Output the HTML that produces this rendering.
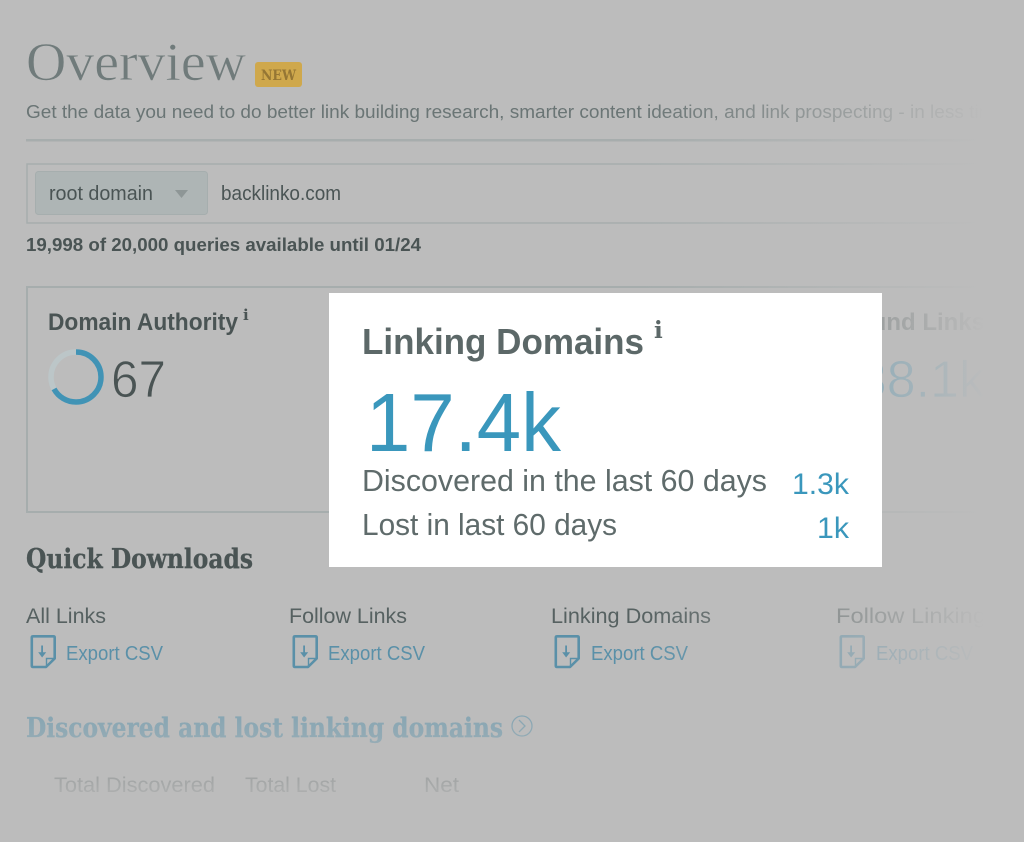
<!DOCTYPE html>
<html lang="en">
<head>
<meta charset="utf-8">
<title>Overview</title>
<style>
html,body{margin:0;padding:0;background:#bcbcbc;width:1024px;height:842px;overflow:hidden}
svg{display:block}
text{font-family:"Liberation Sans",sans-serif;white-space:pre}
.slab{font-family:"DejaVu Serif","Liberation Serif",serif;font-weight:700}
.ser{font-family:"Liberation Serif",serif}
.b{font-weight:700}
.dk{fill:#4a5454}
.md{fill:#566161}
.lnk{fill:#5a90a8;font-size:20px}
.ic{fill:none;stroke:#5a90a8;stroke-width:2.6;stroke-linejoin:round}
</style>
</head>
<body>
<svg width="1024" height="842" viewBox="0 0 1024 842" xmlns="http://www.w3.org/2000/svg">
<defs>
<linearGradient id="fr" gradientUnits="userSpaceOnUse" x1="640" y1="0" x2="985" y2="0">
<stop offset="0" stop-color="#bcbcbc" stop-opacity="0"/>
<stop offset="1" stop-color="#bcbcbc" stop-opacity="1"/>
</linearGradient>
<linearGradient id="fb" gradientUnits="userSpaceOnUse" x1="0" y1="670" x2="0" y2="815">
<stop offset="0" stop-color="#bcbcbc" stop-opacity="0"/>
<stop offset="1" stop-color="#bcbcbc" stop-opacity="1"/>
</linearGradient>
<g id="doc">
<path class="ic" d="M33 636.300H53.500Q54.700 636.300 54.700 637.500V658.500L46 667H33Q31.800 667 31.800 665.800V637.500Q31.800 636.300 33 636.300Z"/>
<path d="M54 658.500H46.500V666.500Z" fill="none" stroke="#5a90a8" stroke-width="1.400"/>
<path d="M41.200 645.500H43V652.300H46.200L42.100 657.500L38.200 652.300H41.200Z" fill="#5a90a8"/>
</g>
</defs>
<rect width="1024" height="842" fill="#bcbcbc"/>

<text class="ser" x="26" y="80" font-size="54" fill="#707b7b" stroke="#bcbcbc" stroke-width="0.6" textLength="220" lengthAdjust="spacingAndGlyphs">Overview</text>
<rect x="255" y="62" width="47" height="25" rx="3" fill="#cfa84c"/>
<text class="slab" x="261" y="80" font-size="14" fill="#957634" textLength="35" lengthAdjust="spacingAndGlyphs">NEW</text>

<text x="26" y="118" font-size="18" fill="#6a7575" textLength="979" lengthAdjust="spacingAndGlyphs">Get the data you need to do better link building research, smarter content ideation, and link prospecting - in less time</text>
<rect x="26" y="139" width="960" height="2.500" fill="#a7adad"/>

<rect x="27" y="164" width="960" height="59" fill="none" stroke="#a6adad" stroke-width="1.500"/>
<rect x="35.500" y="171.500" width="172" height="43" rx="3" fill="#aeb5b5" stroke="#a6aeae"/>
<text class="dk" x="49" y="200" font-size="20" textLength="104" lengthAdjust="spacingAndGlyphs">root domain</text>
<path d="M175 190H188L181.500 198Z" fill="#8e9696"/>
<text class="dk" x="221" y="200" font-size="20" textLength="120" lengthAdjust="spacingAndGlyphs">backlinko.com</text>
<text class="b dk" x="26" y="251" font-size="18" textLength="395" lengthAdjust="spacingAndGlyphs">19,998 of 20,000 queries available until 01/24</text>

<rect x="27" y="287" width="970" height="225" fill="none" stroke="#a6adad" stroke-width="2"/>
<text class="b dk" x="48" y="330" font-size="24" textLength="190" lengthAdjust="spacingAndGlyphs">Domain Authority</text>
<text class="slab dk" x="243" y="320" font-size="15">i</text>
<circle cx="76" cy="377" r="25" fill="none" stroke="#bcc6c8" stroke-width="5.500"/>
<circle cx="76" cy="377" r="25" fill="none" stroke="#4193b5" stroke-width="5.500" stroke-dasharray="105.200 157.100" transform="rotate(-90 76 377)"/>
<text class="dk" x="111" y="397" font-size="52" stroke="#bcbcbc" stroke-width="0.8" textLength="55" lengthAdjust="spacingAndGlyphs">67</text>

<text class="b md" x="985" y="330" font-size="24" text-anchor="end">Inbound Links</text>
<text class="slab md" x="990" y="320" font-size="15">i</text>
<text x="985" y="397" font-size="52" fill="#3f8fb0" stroke="#bcbcbc" stroke-width="0.8" text-anchor="end">38.1k</text>

<text class="slab dk" x="26" y="568" font-size="27" stroke="#4a5454" stroke-width="0.3" textLength="227" lengthAdjust="spacingAndGlyphs">Quick Downloads</text>

<text class="md" x="26" y="623" font-size="21" textLength="80" lengthAdjust="spacingAndGlyphs">All Links</text>
<text class="md" x="289" y="623" font-size="21" textLength="118" lengthAdjust="spacingAndGlyphs">Follow Links</text>
<text class="md" x="551" y="623" font-size="21" textLength="160" lengthAdjust="spacingAndGlyphs">Linking Domains</text>
<text class="md" x="836" y="623" font-size="21" textLength="250" lengthAdjust="spacingAndGlyphs">Follow Linking Domains</text>

<use href="#doc"/>
<use href="#doc" x="262"/>
<use href="#doc" x="524"/>
<use href="#doc" x="809"/>
<text class="lnk" x="66" y="660" textLength="97" lengthAdjust="spacingAndGlyphs">Export CSV</text>
<text class="lnk" x="328" y="660" textLength="97" lengthAdjust="spacingAndGlyphs">Export CSV</text>
<text class="lnk" x="591" y="660" textLength="97" lengthAdjust="spacingAndGlyphs">Export CSV</text>
<text class="lnk" x="876" y="660" textLength="97" lengthAdjust="spacingAndGlyphs">Export CSV</text>

<text class="slab" x="26" y="737" font-size="27" fill="#6f9bae" stroke="#6f9bae" stroke-width="0.3" textLength="477" lengthAdjust="spacingAndGlyphs">Discovered and lost linking domains</text>
<circle cx="522" cy="726" r="10" fill="none" stroke="#6f9bae" stroke-width="1.300"/>
<path d="M519 720L525 726L519 732" fill="none" stroke="#6f9bae" stroke-width="1.300"/>
<text class="md" x="54" y="792" font-size="21" textLength="161" lengthAdjust="spacingAndGlyphs">Total Discovered</text>
<text class="md" x="245" y="792" font-size="21" textLength="91" lengthAdjust="spacingAndGlyphs">Total Lost</text>
<text class="md" x="424" y="792" font-size="21" textLength="35" lengthAdjust="spacingAndGlyphs">Net</text>

<rect width="1024" height="842" fill="url(#fr)"/>
<rect width="1024" height="842" fill="url(#fb)"/>

<rect x="329" y="293" width="553" height="274" fill="#ffffff"/>
<text class="b" x="362" y="354" font-size="36" fill="#5c6868" textLength="282" lengthAdjust="spacingAndGlyphs">Linking Domains</text>
<text class="slab" x="654" y="338" font-size="23" fill="#5c6868">i</text>
<text x="366" y="451" font-size="83" fill="#3a97bc" textLength="195" lengthAdjust="spacingAndGlyphs">17.4k</text>
<text x="362" y="491" font-size="31" fill="#5f6b6b" textLength="405" lengthAdjust="spacingAndGlyphs">Discovered in the last 60 days</text>
<text x="792" y="494" font-size="30" fill="#3a97bc" textLength="57" lengthAdjust="spacingAndGlyphs">1.3k</text>
<text x="362" y="535" font-size="31" fill="#5f6b6b" textLength="255" lengthAdjust="spacingAndGlyphs">Lost in last 60 days</text>
<text x="817" y="538" font-size="30" fill="#3a97bc" textLength="32" lengthAdjust="spacingAndGlyphs">1k</text>
</svg>
</body>
</html>
